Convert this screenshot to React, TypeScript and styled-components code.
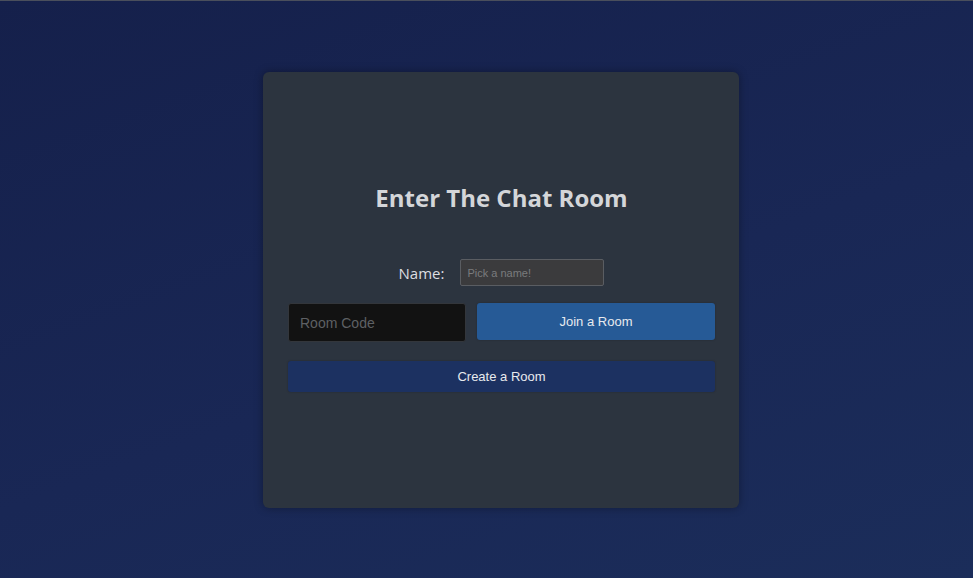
import React from "react";
import styled, { createGlobalStyle } from "styled-components";

const Global = createGlobalStyle`
  html, body { margin: 0; padding: 0; height: 100%; }
  body {
    background: linear-gradient(160deg, #15204b 0%, #192755 55%, #1b2d5a 100%);
    border-top: 1px solid #4a4f5c;
    box-sizing: border-box;
  }
  #root { height: 100%; }
`;

const Page = styled.div`
  height: 577px;
  display: flex;
  align-items: center;
  justify-content: center;
  padding-left: 29px;
  box-sizing: border-box;
`;

const Card = styled.div`
  width: 476px;
  height: 436px;
  background: #2c343f;
  border-radius: 6px;
  box-shadow: 0 0 8px rgba(0, 0, 0, 0.35);
  display: flex;
  flex-direction: column;
  align-items: stretch;
  padding: 0 24px 0 25px;
  box-sizing: border-box;
  margin-top: 1px;
`;

const Title = styled.h1`
  margin: 110px 0 0;
  text-align: center;
  font-family: "Open Sans", "Noto Sans", sans-serif;
  font-weight: 700;
  font-size: 24px;
  line-height: 32px;
  color: #d4d6d9;
`;

const NameRow = styled.div`
  display: flex;
  align-items: center;
  justify-content: center;
  gap: 16px;
  margin-top: 45px;
`;

const Label = styled.label`
  font-family: "Open Sans", "Noto Sans", sans-serif;
  font-size: 15px;
  color: #dcdde0;
`;

const NameInput = styled.input`
  width: 144px;
  height: 27px;
  box-sizing: border-box;
  background: #3b3b3d;
  border: 1px solid #5a5d62;
  border-radius: 2px;
  padding: 0 6px;
  font-family: "Liberation Sans", Arial, sans-serif;
  font-size: 11px;
  color: #ddd;
  outline: none;
  &::placeholder { color: #7a7b7e; }
`;

const RoomRow = styled.div`
  display: flex;
  align-items: flex-start;
  gap: 11px;
  margin-top: 17px;
`;

const CodeInput = styled.input`
  width: 178px;
  height: 39px;
  box-sizing: border-box;
  background: #121212;
  border: 1px solid #33363b;
  border-radius: 3px;
  padding: 0 11px;
  font-family: "Liberation Sans", Arial, sans-serif;
  font-size: 14px;
  color: #ddd;
  outline: none;
  &::placeholder { color: #5e6064; }
`;

const Button = styled.button<{ $variant: "join" | "create" }>`
  flex: ${(p) => (p.$variant === "join" ? "1" : "none")};
  width: ${(p) => (p.$variant === "join" ? "auto" : "100%")};
  height: ${(p) => (p.$variant === "join" ? "37px" : "31px")};
  background: ${(p) => (p.$variant === "join" ? "#265a96" : "#1c3161")};
  border: none;
  border-radius: 3px;
  font-family: "Liberation Sans", Arial, sans-serif;
  font-size: 13px;
  color: #e8eaee;
  cursor: pointer;
  box-shadow: 0 0 2px rgba(0, 0, 0, 0.25);
`;

const CreateWrap = styled.div`
  margin-top: 19px;
  display: flex;
`;

export default function App() {
  return (
    <>
      <Global />
      <Page>
        <Card>
          <Title>Enter The Chat Room</Title>
          <NameRow>
            <Label>Name:</Label>
            <NameInput placeholder="Pick a name!" />
          </NameRow>
          <RoomRow>
            <CodeInput placeholder="Room Code" />
            <Button $variant="join">Join a Room</Button>
          </RoomRow>
          <CreateWrap>
            <Button $variant="create">Create a Room</Button>
          </CreateWrap>
        </Card>
      </Page>
    </>
  );
}
